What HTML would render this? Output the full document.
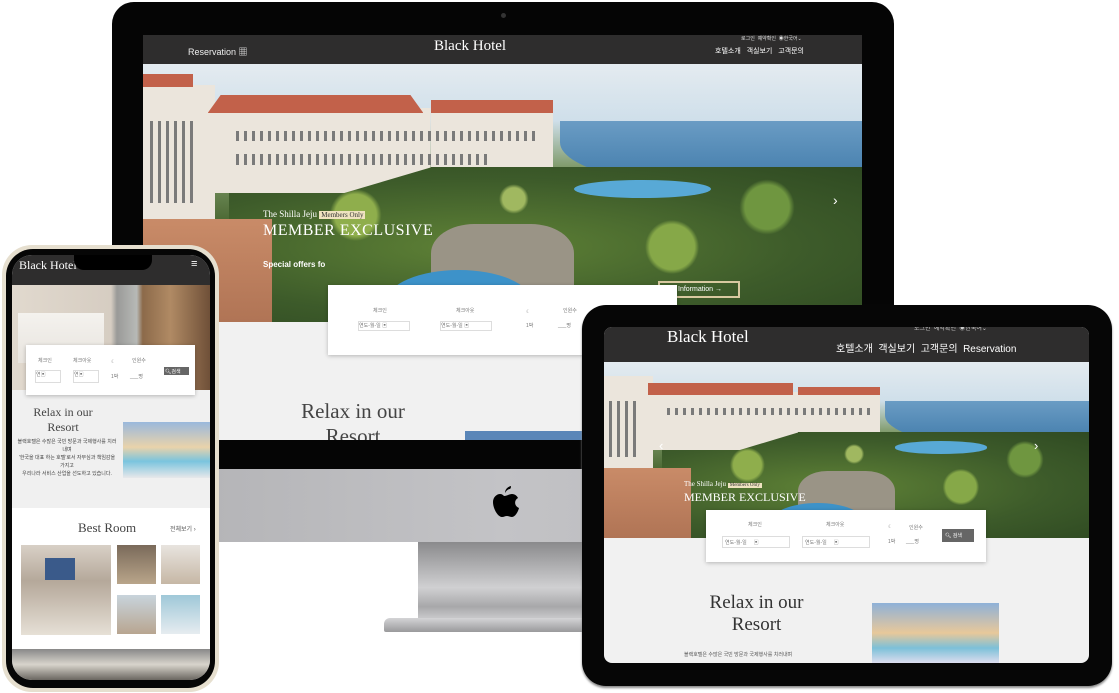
<!DOCTYPE html>
<html><head><meta charset="utf-8"><style>
*{margin:0;padding:0;box-sizing:border-box}
body{width:1119px;height:693px;background:#fff;position:relative;overflow:hidden;font-family:"Liberation Sans","Noto Sans CJK KR",sans-serif}
.a{position:absolute}
.serif{font-family:"Liberation Serif","Noto Serif CJK SC",serif}
.hero{position:absolute;overflow:hidden;background:linear-gradient(#e4ebf0,#cfdfea 22%,#7f9a6a 40%,#4e6b36 60%,#5f6f45)}
.hero .sea{position:absolute;left:58%;top:22%;width:42%;height:28%;background:linear-gradient(#6a9cc4,#3b76a6);border-radius:0 0 0 70%}
.hero .bld{position:absolute;background:#ebe5dc}
.hero .roof{position:absolute;background:#c2614a}
.hero .win{position:absolute;background:repeating-linear-gradient(90deg,#7a7a7a 0 3px,transparent 3px 8px)}
.hero .grn{position:absolute;left:12%;top:40%;width:88%;height:62%;background:radial-gradient(circle at 20% 30%,#8fae4c 0 4%,transparent 5%),radial-gradient(circle at 45% 20%,#a0b860 0 3%,transparent 4%),radial-gradient(circle at 70% 50%,#86a848 0 5%,transparent 6%),radial-gradient(circle at 85% 25%,#6f9640 0 4%,transparent 5%),radial-gradient(ellipse at 40% 50%,#5f8236,#3d5b2a 60%,#2f4a22)}
.hero .pool{position:absolute;background:#3d92c9;border-radius:50%}
.hero .pat{position:absolute;left:0;top:60%;width:18%;height:40%;background:linear-gradient(#c98b68,#b07455)}
.hero .plaza{position:absolute;left:40%;top:62%;width:20%;height:38%;background:#9a9486;border-radius:30% 30% 0 0}
.dark{background:#2e2d2d;color:#fff}
.box{position:absolute;background:#fff;box-shadow:0 1px 4px rgba(0,0,0,.25);color:#777}
</style></head><body>

<!-- MONITOR -->
<div class="a" style="left:112px;top:2px;width:782px;height:468px;background:#050505;border-radius:22px 22px 0 0"></div>
<div class="a" style="left:501px;top:13px;width:5px;height:5px;border-radius:50%;background:#333"></div>
<div class="a" style="left:112px;top:469px;width:782px;height:73px;background:linear-gradient(90deg,#b0b0b3,#c3c3c6 50%,#b5b5b8)"></div>
<svg class="a" style="left:488px;top:486px" width="32" height="37" viewBox="0 0 32 37"><path fill="#000" d="M22 3c-2 0-4 2-5 4 0-3 2-6 6-7 0 1 0 2-1 3zM16 10c3 0 5-2 8-2 3 0 5 2 6 4-4 2-4 8 1 10-1 4-4 9-7 9-2 0-3-1-5-1s-3 1-5 1c-4 0-9-8-9-15 0-5 4-8 7-8 2 0 3 1 4 2z"/></svg>
<div class="a" style="left:418px;top:542px;width:164px;height:76px;background:linear-gradient(#8a8a8c,#d0d0d2 60%,#a8a8aa 85%,#c8c8ca)"></div>
<div class="a" style="left:384px;top:618px;width:206px;height:14px;background:linear-gradient(#d4d4d6,#9a9a9c);border-radius:6px 6px 2px 2px"></div>

<div class="a" style="left:143px;top:35px;width:719px;height:405px;background:#f1f1f1;overflow:hidden">
 <div class="a dark" style="left:0;top:0;width:719px;height:29px"></div>
 <div class="a" style="left:45px;top:10px;font-size:9px;color:#eee">Reservation ▦</div>
 <div class="a serif" style="left:291px;top:3px;font-size:15px;color:#fff">Black Hotel</div>
 <div class="a" style="left:598px;top:0px;font-size:5px;color:#ddd">로그인 &nbsp;예약확인 &nbsp;◉한국어⌄</div>
 <div class="a" style="left:572px;top:11px;font-size:7px;color:#fff">호텔소개 &nbsp;&nbsp;객실보기 &nbsp;&nbsp;고객문의</div>
 <div class="hero" style="left:0;top:29px;width:719px;height:258px">
  <div class="sea"></div><div class="grn"></div><div class="plaza"></div>
  <div class="bld" style="left:0;top:8%;width:10%;height:55%"></div>
  <div class="bld" style="left:10%;top:17%;width:30%;height:33%;clip-path:polygon(0 0,100% 0,100% 70%,60% 100%,0 100%)"></div>
  <div class="bld" style="left:40%;top:17%;width:17%;height:23%"></div>
  <div class="roof" style="left:9%;top:12%;width:30%;height:7%;clip-path:polygon(6% 0,94% 0,100% 100%,0 100%)"></div>
  <div class="roof" style="left:40%;top:14%;width:17%;height:5%"></div>
  <div class="roof" style="left:0;top:4%;width:7%;height:5%"></div>
  <div class="win" style="left:1%;top:22%;width:6%;height:32%"></div>
  <div class="win" style="left:13%;top:26%;width:42%;height:4%"></div>
  <div class="win" style="left:13%;top:35%;width:35%;height:4%"></div>
  <div class="pat"></div>
  <div class="pool" style="left:34%;top:80%;width:20%;height:24%"></div>
  <div class="pool" style="left:60%;top:45%;width:19%;height:7%;background:#58a9d6"></div>
  <div class="a serif" style="left:120px;top:145px;font-size:9px;color:#fff">The Shilla Jeju <span style="background:#efe3c0;color:#333;font-size:7px;padding:0 2px">Members Only</span></div>
  <div class="a serif" style="left:120px;top:158px;font-size:16px;color:#fff;letter-spacing:.5px">MEMBER EXCLUSIVE</div>
  <div class="a" style="left:120px;top:196px;font-size:8px;color:#fff;font-weight:bold">Special offers fo</div>
  <div class="a" style="left:515px;top:217px;width:82px;height:17px;border:2px solid #d8c9a0;font-size:7px;color:#fff;padding:3px 0 0 18px">Information →</div>
  <div class="a" style="left:690px;top:128px;color:#fff;font-size:14px">›</div>
 </div>
 <div class="a serif" style="left:145px;top:364px;font-size:21px;color:#444;text-align:center;width:130px;line-height:25px">Relax in our Resort</div>
 <div class="a" style="left:322px;top:396px;width:120px;height:10px;background:#5a86b8"></div>
 <div class="box" style="left:185px;top:250px;width:349px;height:70px;font-size:5px">
  <div class="a" style="left:45px;top:22px">체크인</div><div class="a" style="left:30px;top:36px;width:52px;height:10px;border:1px solid #ddd">연도-월-일 ▣</div>
  <div class="a" style="left:128px;top:22px">체크아웃</div><div class="a" style="left:112px;top:36px;width:52px;height:10px;border:1px solid #ddd">연도-월-일 ▣</div>
  <div class="a" style="left:198px;top:24px">☾</div><div class="a" style="left:198px;top:37px">1박</div>
  <div class="a" style="left:235px;top:22px">인원수</div><div class="a" style="left:230px;top:37px">___명</div>
 </div>
</div>

<!-- TABLET -->
<div class="a" style="left:582px;top:305px;width:530px;height:381px;background:#060606;border-radius:24px;box-shadow:0 2px 2px #888"></div>
<div class="a" style="left:604px;top:327px;width:485px;height:336px;background:#f1f1f1;border-radius:8px;overflow:hidden">
 <div class="a dark" style="left:0;top:0;width:485px;height:35px"></div>
 <div class="a serif" style="left:63px;top:0px;font-size:17px;color:#fff">Black Hotel</div>
 <div class="a" style="left:310px;top:-4px;font-size:6px;color:#ccc">로그인 &nbsp;예약확인 &nbsp;◉한국어⌄</div>
 <div class="a" style="left:232px;top:13px;font-size:10px;color:#fff">호텔소개 &nbsp;객실보기 &nbsp;고객문의 &nbsp;Reservation</div>
 <div class="hero" style="left:0;top:35px;width:485px;height:176px">
  <div class="sea"></div><div class="grn"></div><div class="plaza"></div>
  <div class="bld" style="left:0;top:8%;width:10%;height:55%"></div>
  <div class="bld" style="left:10%;top:17%;width:30%;height:33%;clip-path:polygon(0 0,100% 0,100% 70%,60% 100%,0 100%)"></div>
  <div class="bld" style="left:40%;top:17%;width:17%;height:23%"></div>
  <div class="roof" style="left:9%;top:12%;width:30%;height:7%"></div>
  <div class="roof" style="left:40%;top:14%;width:17%;height:5%"></div>
  <div class="win" style="left:1%;top:22%;width:6%;height:32%"></div>
  <div class="win" style="left:13%;top:26%;width:42%;height:4%"></div>
  <div class="pat"></div>
  <div class="pool" style="left:34%;top:80%;width:20%;height:24%"></div>
  <div class="pool" style="left:60%;top:45%;width:19%;height:7%;background:#58a9d6"></div>
  <div class="a serif" style="left:80px;top:118px;font-size:7px;color:#fff">The Shilla Jeju <span style="background:#efe3c0;color:#333;font-size:5px;padding:0 2px">Members Only</span></div>
  <div class="a serif" style="left:80px;top:128px;font-size:12px;color:#fff">MEMBER EXCLUSIVE</div>
  <div class="a" style="left:430px;top:76px;color:#fff;font-size:13px">›</div>
  <div class="a" style="left:55px;top:76px;color:#fff;font-size:13px">‹</div>
 </div>
 <div class="box" style="left:102px;top:183px;width:280px;height:52px;font-size:5px">
  <div class="a" style="left:42px;top:11px">체크인</div><div class="a" style="left:16px;top:26px;width:68px;height:12px;border:1px solid #ddd;padding:2px">연도-월-일 &nbsp;&nbsp;&nbsp;&nbsp;▣</div>
  <div class="a" style="left:120px;top:11px">체크아웃</div><div class="a" style="left:96px;top:26px;width:68px;height:12px;border:1px solid #ddd;padding:2px">연도-월-일 &nbsp;&nbsp;&nbsp;&nbsp;▣</div>
  <div class="a" style="left:182px;top:14px">☾</div><div class="a" style="left:182px;top:28px">1박</div>
  <div class="a" style="left:203px;top:14px">인원수</div><div class="a" style="left:200px;top:28px">___명</div>
  <div class="a" style="left:236px;top:19px;width:32px;height:13px;background:#666;color:#fff;padding:3px">🔍︎ 검색</div>
 </div>
 <div class="a serif" style="left:90px;top:265px;font-size:19px;color:#333;text-align:center;width:125px;line-height:22px">Relax in our Resort</div>
 <div class="a" style="left:80px;top:324px;font-size:5px;color:#555">블랙호텔은 수많은 국빈 방문과 국제행사를 치러내며</div>
 <div class="a" style="left:268px;top:276px;width:127px;height:60px;background:linear-gradient(#8fb1d8,#e8c89a 50%,#7cc0d8 75%,#dde)"></div>
</div>

<!-- PHONE -->
<div class="a" style="left:2px;top:245px;width:217px;height:447px;background:#e6dfcf;border-radius:30px"></div>
<div class="a" style="left:6px;top:249px;width:209px;height:439px;background:#060606;border-radius:27px"></div>
<div class="a" style="left:12px;top:255px;width:198px;height:425px;background:#fff;border-radius:20px;overflow:hidden">
 <div class="a dark" style="left:0;top:0;width:198px;height:30px"></div>
 <div class="a serif" style="left:7px;top:3px;font-size:12px;color:#fff">Black Hotel</div>
 <div class="a" style="left:62px;top:-2px;width:78px;height:17px;background:#000;border-radius:0 0 10px 10px"></div>
 <div class="a" style="left:179px;top:3px;font-size:11px;color:#fff">≡</div>
 <div class="a" style="left:0;top:30px;width:198px;height:105px;background:linear-gradient(90deg,#e1d9ce,#d6cdc2 50%,#9a9a98 53%,#b7b9b6 63%,#8c6a4a 66%,#b08a64 80%,#6f5038)"></div>
 <div class="a" style="left:6px;top:58px;width:86px;height:50px;background:linear-gradient(#f4f2ee,#e8e4de)"></div>
 <div class="a" style="left:0;top:135px;width:198px;height:118px;background:#f0f0f0"></div>
 <div class="box" style="left:14px;top:90px;width:169px;height:50px;font-size:5px">
  <div class="a" style="left:12px;top:12px">체크인</div><div class="a" style="left:9px;top:25px;width:26px;height:13px;border:1px solid #ddd">연▣</div>
  <div class="a" style="left:47px;top:12px">체크아웃</div><div class="a" style="left:47px;top:25px;width:26px;height:13px;border:1px solid #ddd">연▣</div>
  <div class="a" style="left:85px;top:14px">☾</div><div class="a" style="left:85px;top:28px">1박</div>
  <div class="a" style="left:106px;top:12px">인원수</div><div class="a" style="left:104px;top:28px">___명</div>
  <div class="a" style="left:138px;top:22px;width:25px;height:8px;background:#666;color:#fff;padding:1px">🔍︎검색</div>
 </div>
 <div class="a serif" style="left:12px;top:150px;font-size:12px;color:#444;text-align:center;width:78px;line-height:15px">Relax in our Resort</div>
 <div class="a" style="left:5px;top:183px;width:100px;font-size:5px;color:#444;text-align:center;line-height:8px">블랙호텔은 수많은 국빈 방문과 국제행사를 치러내며<br>'한국을 대표 하는 호텔'로서 자부심과 책임감을 가지고<br>우리나라 서비스 산업을 선도하고 있습니다.</div>
 <div class="a" style="left:111px;top:167px;width:87px;height:56px;background:linear-gradient(#9ab8dc,#e9d3ab 45%,#7ac4de 70%,#e8e8ea)"></div>
 <div class="a serif" style="left:66px;top:265px;font-size:13px;color:#444">Best Room</div>
 <div class="a" style="left:158px;top:269px;font-size:6px;color:#555">전체보기 ›</div>
 <div class="a" style="left:9px;top:290px;width:90px;height:90px;background:linear-gradient(#d8d0c6,#b5a89a 40%,#e6e0d6)"></div>
 <div class="a" style="left:33px;top:303px;width:30px;height:22px;background:#3a5a8a"></div>
 <div class="a" style="left:105px;top:290px;width:39px;height:39px;background:linear-gradient(#7a6a5a,#b9a58a)"></div>
 <div class="a" style="left:149px;top:290px;width:39px;height:39px;background:linear-gradient(#e8e4df,#c6b7a5)"></div>
 <div class="a" style="left:105px;top:340px;width:39px;height:39px;background:linear-gradient(#c8d4dc,#b8a590)"></div>
 <div class="a" style="left:149px;top:340px;width:39px;height:39px;background:linear-gradient(#9fc8d8,#e6ecf0)"></div>
 <div class="a" style="left:0;top:394px;width:198px;height:31px;background:linear-gradient(#888,#d8d4cc 50%,#6a6660)"></div>
</div>
</body></html>
